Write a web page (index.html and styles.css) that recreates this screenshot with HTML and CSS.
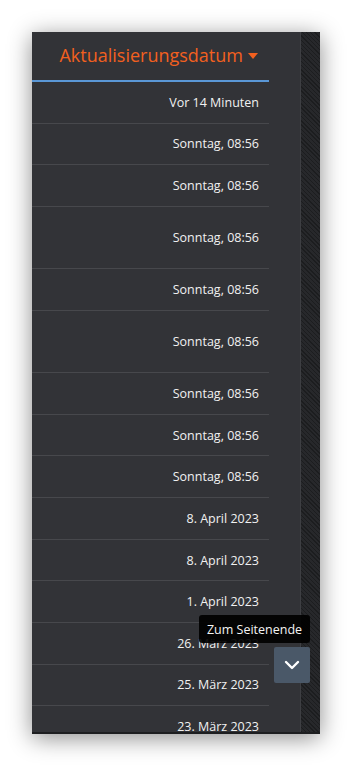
FILE: index.html
```html
<!DOCTYPE html>
<html lang="de">
  <head>
    <meta charset="UTF-8" />
    <meta name="viewport" content="width=device-width, initial-scale=1.0" />
    <title>Aktualisierungsdatum</title>
    <link rel="stylesheet" href="styles.css">
  </head>
  <body>
    <div class="window">
      <div class="table">
        <div class="head">
          <span>Aktualisierungsdatum</span>
          <span class="caret"></span>
        </div>
        <div class="row">Vor 14 Minuten</div>
        <div class="row">Sonntag, 08:56</div>
        <div class="row">Sonntag, 08:56</div>
        <div class="row tall">Sonntag, 08:56</div>
        <div class="row">Sonntag, 08:56</div>
        <div class="row tall">Sonntag, 08:56</div>
        <div class="row">Sonntag, 08:56</div>
        <div class="row">Sonntag, 08:56</div>
        <div class="row">Sonntag, 08:56</div>
        <div class="row">8. April 2023</div>
        <div class="row">8. April 2023</div>
        <div class="row">1. April 2023</div>
        <div class="row">26. März 2023</div>
        <div class="row">25. März 2023</div>
        <div class="row">23. März 2023</div>
      </div>
      <div class="gap"></div>
      <div class="scroll"></div>

      <div class="tooltip">Zum Seitenende</div>
      <button class="to-bottom" title="Zum Seitenende">
        <svg width="16" height="10" viewBox="0 0 16 10">
          <path d="M2 2 L8 8 L14 2" fill="none" stroke="#fff" stroke-width="2.4" stroke-linecap="round" stroke-linejoin="round" />
        </svg>
      </button>
    </div>
  </body>
</html>
```

FILE: styles.css
```css
* {
  box-sizing: border-box;
  margin: 0;
  padding: 0;
}

body {
  font-family: "Open Sans", "Noto Sans", sans-serif;
  background: white;
  padding: 32px;
}

.window {
  position: relative;
  display: flex;
  width: 288px;
  height: 702px;
  background: #323337;
  border-bottom: 2px solid #1d1e20;
  box-shadow: 0 4px 22px rgba(0, 0, 0, 0.45);
  overflow: hidden;
}

.table {
  width: 237px;
  flex-shrink: 0;
}

.head {
  height: 50px;
  display: flex;
  align-items: center;
  justify-content: flex-end;
  gap: 5px;
  padding: 0 11px 2px 0;
  font-size: 18px;
  color: #f2601f;
  border-bottom: 2px solid #5a97d6;
}

.caret {
  width: 0;
  height: 0;
  border-left: 5px solid transparent;
  border-right: 5px solid transparent;
  border-top: 6px solid #f2601f;
  margin-top: 2px;
}

.row {
  height: 41.65px;
  display: flex;
  align-items: center;
  justify-content: flex-end;
  padding-right: 10px;
  font-size: 12.5px;
  color: #f1f1f1;
  border-bottom: 1px solid #47484c;
}

.row.tall {
  height: 62.3px;
}

.gap {
  width: 31px;
  flex-shrink: 0;
}

.scroll {
  flex: 1;
  border-left: 1px solid #3e3f43;
  background: repeating-linear-gradient(45deg, #1c1d1f 0 1px, #27282b 1px 3px);
}

.tooltip {
  position: absolute;
  left: 167px;
  top: 583px;
  width: 111px;
  height: 28px;
  display: flex;
  align-items: center;
  justify-content: center;
  background: rgba(0, 0, 0, 0.92);
  border-radius: 3px;
  color: #f4f4f4;
  font-size: 12.5px;
}

.to-bottom {
  position: absolute;
  left: 242px;
  top: 615px;
  width: 36px;
  height: 36px;
  border: none;
  border-radius: 2px;
  background: #4a5868;
  display: flex;
  align-items: center;
  justify-content: center;
}
```
